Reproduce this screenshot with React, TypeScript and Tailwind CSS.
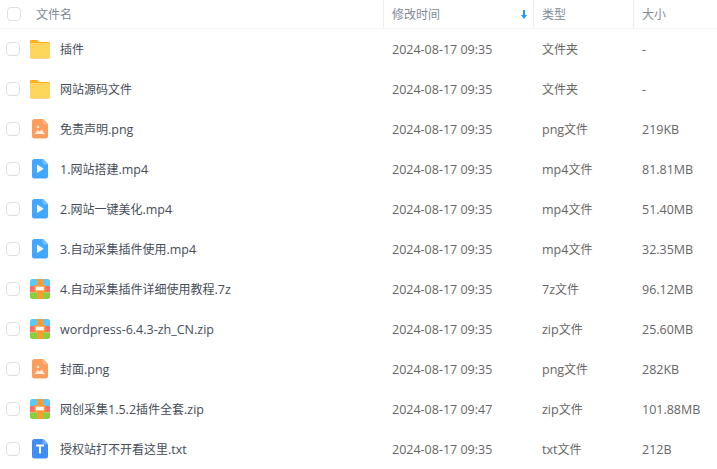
import React from "react";

type Kind = "folder" | "image" | "video" | "zip" | "text";

const files: { name: string; time: string; type: string; size: string; kind: Kind }[] = [
  { name: "插件", time: "2024-08-17 09:35", type: "文件夹", size: "-", kind: "folder" },
  { name: "网站源码文件", time: "2024-08-17 09:35", type: "文件夹", size: "-", kind: "folder" },
  { name: "免责声明.png", time: "2024-08-17 09:35", type: "png文件", size: "219KB", kind: "image" },
  { name: "1.网站搭建.mp4", time: "2024-08-17 09:35", type: "mp4文件", size: "81.81MB", kind: "video" },
  { name: "2.网站一键美化.mp4", time: "2024-08-17 09:35", type: "mp4文件", size: "51.40MB", kind: "video" },
  { name: "3.自动采集插件使用.mp4", time: "2024-08-17 09:35", type: "mp4文件", size: "32.35MB", kind: "video" },
  { name: "4.自动采集插件详细使用教程.7z", time: "2024-08-17 09:35", type: "7z文件", size: "96.12MB", kind: "zip" },
  { name: "wordpress-6.4.3-zh_CN.zip", time: "2024-08-17 09:35", type: "zip文件", size: "25.60MB", kind: "zip" },
  { name: "封面.png", time: "2024-08-17 09:35", type: "png文件", size: "282KB", kind: "image" },
  { name: "网创采集1.5.2插件全套.zip", time: "2024-08-17 09:47", type: "zip文件", size: "101.88MB", kind: "zip" },
  { name: "授权站打不开看这里.txt", time: "2024-08-17 09:35", type: "txt文件", size: "212B", kind: "text" },
];

// latin runs are a bit wider than the cjk ones in the picture
const Mixed = ({ text }: { text: string }) => (
  <>
    {text.split(/([\x20-\x7e]+)/).map((part, i) =>
      i % 2 === 1 ? (
        <span key={i} className="text-[12.5px]">
          {part}
        </span>
      ) : (
        part
      ),
    )}
  </>
);

const FileIcon = ({ kind }: { kind: Kind }) => {
  if (kind === "folder") {
    return (
      <svg width="20" height="20" viewBox="0 0 20 20">
        <path d="M0 2.500C0 1.700.7 1 1.500 1h5c.6 0 1 .2 1.400.6L9.400 3H18.500c.8 0 1.500.7 1.500 1.500V18c0 .8-.7 1.500-1.500 1.500H1.500C.7 19.500 0 18.800 0 18Z" fill="#fdb022" />
        <path d="M0 5.500C0 4.700.7 4 1.500 4h17c.8 0 1.500.7 1.500 1.500V17.500c0 .8-.7 1.500-1.500 1.500h-17C.7 19 0 18.300 0 17.500Z" fill="#ffd65c" />
      </svg>
    );
  }
  if (kind === "zip") {
    return (
      <svg width="20" height="20" viewBox="0 0 20 20">
        <path d="M2.500 0h15A2.500 2.500 0 0 1 20 2.500V7H0V2.500A2.500 2.500 0 0 1 2.500 0Z" fill="#5ac8fa" />
        <rect x="0" y="7" width="20" height="6.500" fill="#f96d6d" />
        <path d="M0 13.500h20v4a2.500 2.500 0 0 1-2.500 2.500h-15A2.500 2.500 0 0 1 0 17.500Z" fill="#84d13f" />
        <rect x="7.300" y="0" width="6" height="20" fill="#ff9a2e" />
        <rect x="4.300" y="6" width="11" height="7.300" rx="1" fill="#ff9a2e" />
        <rect x="5.800" y="7.700" width="8" height="3.600" fill="#fff" />
      </svg>
    );
  }
  const color = kind === "image" ? "#ff9d5c" : kind === "video" ? "#42a8ff" : "#3f8cf7";
  return (
    <svg width="20" height="20" viewBox="0 0 20 20">
      <path d="M4.500 0h8c.5 0 1 .2 1.300.5l3.700 3.900c.4.400.5.800.5 1.300V17a2.500 2.500 0 0 1-2.500 2.500H4.500A2.500 2.500 0 0 1 2 17V2.500A2.500 2.500 0 0 1 4.500 0Z" fill={color} />
      <path d="M12.500 0.200V3.500a2 2 0 0 0 2 2h3.300Z" fill="#fff" opacity=".3" />
      {kind === "image" && (
        <>
          <circle cx="8" cy="8" r="1.300" fill="#fff" opacity=".85" />
          <path d="M4.500 15l3.500-4 1.800 1.800 1.700-2.300 3.500 4.500Z" fill="#fff" opacity=".85" />
        </>
      )}
      {kind === "video" && <path d="M7 6v7.500c0 .3.300.5.600.3l5.800-3.700c.2-.2.200-.5 0-.6L7.600 5.800C7.300 5.600 7 5.700 7 6Z" fill="#fff" />}
      {kind === "text" && <path d="M6 5.500h8v2h-3v7H9v-7H6Z" fill="#fff" />}
    </svg>
  );
};

const Checkbox = () => <span className="block h-[14px] w-[14px] rounded-[4px] border border-[#dfe0e2] bg-white" />;

export default function App() {
  return (
    <div className="h-[469px] w-[717px] overflow-hidden bg-white text-[12px] text-[#666] [font-family:'Open_Sans','Noto_Sans_CJK_SC',sans-serif]">
      <div className="grid h-[29px] grid-cols-[383px_150px_100px_84px] border-b border-[#f2f3f5] text-[#818999]">
        <div className="flex items-center pl-[7px]">
          <Checkbox />
          <span className="ml-[15px] pt-px">文件名</span>
        </div>
        <div className="flex items-center justify-between border-l border-[#eceef0] pl-2 pr-[6px]">
          <span className="pt-px">修改时间</span>
          <svg width="6" height="9" viewBox="0 0 6 9">
            <path d="M2 0h2v5h2L3 9 0 5h2Z" fill="#1e9bff" />
          </svg>
        </div>
        <div className="flex items-center border-l border-[#eceef0] pl-2 pt-px">类型</div>
        <div className="flex items-center border-l border-[#eceef0] pl-2 pt-px">大小</div>
      </div>
      {files.map((f) => (
        <div key={f.name} className="grid h-[40px] grid-cols-[384px_150px_100px_83px] items-center">
          <div className="flex items-center pl-[6px]">
            <Checkbox />
            <span className="ml-[10px] flex"><FileIcon kind={f.kind} /></span>
            <span className="ml-[10px] pt-[2px] text-[#454d5a]"><Mixed text={f.name} /></span>
          </div>
          <div className="pl-2 pt-[2px]"><Mixed text={f.time} /></div>
          <div className="pl-2 pt-[2px]"><Mixed text={f.type} /></div>
          <div className="pl-2 pt-[2px]"><Mixed text={f.size} /></div>
        </div>
      ))}
    </div>
  );
}
